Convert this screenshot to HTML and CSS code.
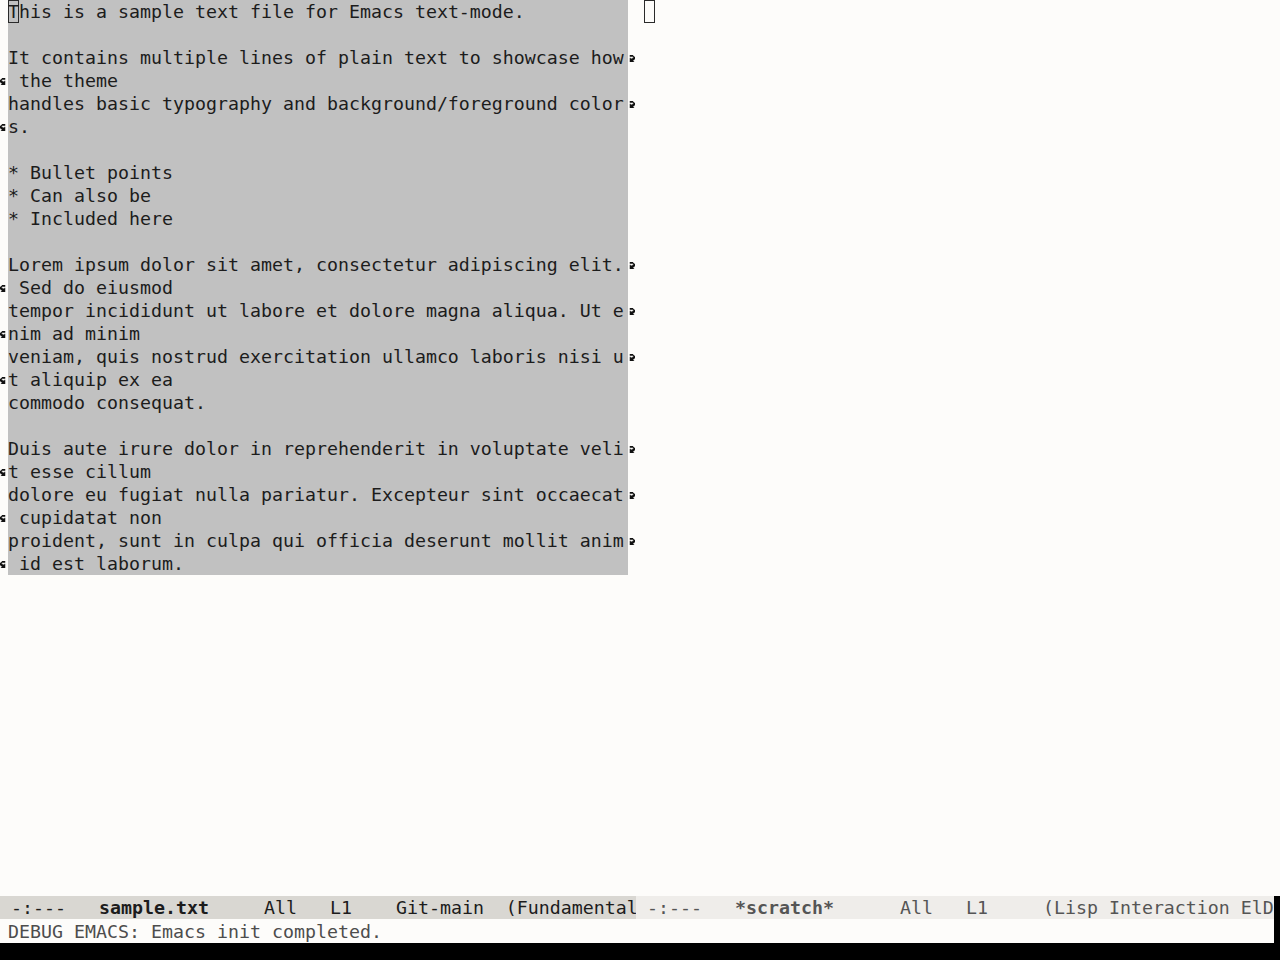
FILE: index.html
```
<!DOCTYPE html>
<html>
<head>
<meta charset="utf-8">
<link rel="stylesheet" href="styles.css">
</head>
<body>
<svg width="0" height="0" class="defs">
  <defs>
    <g id="rarrow">
      <path d="M2 0h4v1H2zM2 1h5v1H2zM6 2h2v1H6zM2 3h1v1H2zM5 3h3v1H5zM2 4h6v1H2zM2 5h5v1H2zM2 6h4v1H2zM2 7h5v1H2z"/>
    </g>
    <g id="larrow">
      <path d="M2 0h4v1H2zM1 1h5v1H1zM0 2h2v1H0zM0 3h3v1H0zM5 3h1v1H5zM0 4h6v1H0zM1 5h5v1H1zM2 6h4v1H2zM1 7h5v1H1z"/>
    </g>
  </defs>
</svg>
<div class="screen">
  <div class="windows">
    <div class="win win-left">
      <div class="wbody wbody-left">
        <div class="textblock">
          <div class="row"><div class="fl"></div><div class="tx"><span class="cursor">T</span>his is a sample text file for Emacs text-mode.</div><div class="fr"></div></div>
          <div class="row"><div class="fl"></div><div class="tx"></div><div class="fr"></div></div>
          <div class="row"><div class="fl"></div><div class="tx">It contains multiple lines of plain text to showcase how</div><div class="fr"><svg class="arr" viewBox="0 0 8 8"><use href="#rarrow"/></svg></div></div>
          <div class="row"><div class="fl"><svg class="arr" viewBox="0 0 8 8"><use href="#larrow"/></svg></div><div class="tx"> the theme</div><div class="fr"></div></div>
          <div class="row"><div class="fl"></div><div class="tx">handles basic typography and background/foreground color</div><div class="fr"><svg class="arr" viewBox="0 0 8 8"><use href="#rarrow"/></svg></div></div>
          <div class="row"><div class="fl"><svg class="arr" viewBox="0 0 8 8"><use href="#larrow"/></svg></div><div class="tx">s.</div><div class="fr"></div></div>
          <div class="row"><div class="fl"></div><div class="tx"></div><div class="fr"></div></div>
          <div class="row"><div class="fl"></div><div class="tx">* Bullet points</div><div class="fr"></div></div>
          <div class="row"><div class="fl"></div><div class="tx">* Can also be</div><div class="fr"></div></div>
          <div class="row"><div class="fl"></div><div class="tx">* Included here</div><div class="fr"></div></div>
          <div class="row"><div class="fl"></div><div class="tx"></div><div class="fr"></div></div>
          <div class="row"><div class="fl"></div><div class="tx">Lorem ipsum dolor sit amet, consectetur adipiscing elit.</div><div class="fr"><svg class="arr" viewBox="0 0 8 8"><use href="#rarrow"/></svg></div></div>
          <div class="row"><div class="fl"><svg class="arr" viewBox="0 0 8 8"><use href="#larrow"/></svg></div><div class="tx"> Sed do eiusmod</div><div class="fr"></div></div>
          <div class="row"><div class="fl"></div><div class="tx">tempor incididunt ut labore et dolore magna aliqua. Ut e</div><div class="fr"><svg class="arr" viewBox="0 0 8 8"><use href="#rarrow"/></svg></div></div>
          <div class="row"><div class="fl"><svg class="arr" viewBox="0 0 8 8"><use href="#larrow"/></svg></div><div class="tx">nim ad minim</div><div class="fr"></div></div>
          <div class="row"><div class="fl"></div><div class="tx">veniam, quis nostrud exercitation ullamco laboris nisi u</div><div class="fr"><svg class="arr" viewBox="0 0 8 8"><use href="#rarrow"/></svg></div></div>
          <div class="row"><div class="fl"><svg class="arr" viewBox="0 0 8 8"><use href="#larrow"/></svg></div><div class="tx">t aliquip ex ea</div><div class="fr"></div></div>
          <div class="row"><div class="fl"></div><div class="tx">commodo consequat.</div><div class="fr"></div></div>
          <div class="row"><div class="fl"></div><div class="tx"></div><div class="fr"></div></div>
          <div class="row"><div class="fl"></div><div class="tx">Duis aute irure dolor in reprehenderit in voluptate veli</div><div class="fr"><svg class="arr" viewBox="0 0 8 8"><use href="#rarrow"/></svg></div></div>
          <div class="row"><div class="fl"><svg class="arr" viewBox="0 0 8 8"><use href="#larrow"/></svg></div><div class="tx">t esse cillum</div><div class="fr"></div></div>
          <div class="row"><div class="fl"></div><div class="tx">dolore eu fugiat nulla pariatur. Excepteur sint occaecat</div><div class="fr"><svg class="arr" viewBox="0 0 8 8"><use href="#rarrow"/></svg></div></div>
          <div class="row"><div class="fl"><svg class="arr" viewBox="0 0 8 8"><use href="#larrow"/></svg></div><div class="tx"> cupidatat non</div><div class="fr"></div></div>
          <div class="row"><div class="fl"></div><div class="tx">proident, sunt in culpa qui officia deserunt mollit anim</div><div class="fr"><svg class="arr" viewBox="0 0 8 8"><use href="#rarrow"/></svg></div></div>
          <div class="row"><div class="fl"><svg class="arr" viewBox="0 0 8 8"><use href="#larrow"/></svg></div><div class="tx"> id est laborum.</div><div class="fr"></div></div>
        </div>
      </div>
      <div class="modeline ml-active"> -:---   <b>sample.txt</b>     All   L1    Git-main  (Fundamental)</div>
    </div>
    <div class="win win-right">
      <div class="wbody">
        <div class="row"><div class="fl"></div><div class="tx tx-plain"><span class="cursor"> </span></div><div class="fr"></div></div>
      </div>
      <div class="modeline ml-inactive"> -:---   <b>*scratch*</b>      All   L1     (Lisp Interaction ElDoc)</div>
    </div>
    <div class="edge">
      <div class="edge-top"></div>
    </div>
  </div>
  <div class="echo-row">
    <div class="echo">DEBUG EMACS: Emacs init completed.</div>
  </div>
</div>
</body>
</html>
```
FILE: styles.css
```
html, body {
  margin: 0;
  padding: 0;
}
body {
  width: 1280px;
  height: 960px;
  background: #000;
  overflow: hidden;
  font-family: "DejaVu Sans Mono", monospace;
  font-size: 18.27px;
  color: #1c1c1c;
}
.defs {
  position: absolute;
}
.screen {
  width: 1280px;
  display: flex;
  flex-direction: column;
}
.windows {
  display: flex;
  height: 919px;
}
.win {
  display: flex;
  flex-direction: column;
  overflow: hidden;
  background: #fdfcfa;
}
.win-left {
  width: 636px;
}
.win-right {
  width: 638px;
}
.edge {
  width: 6px;
  display: flex;
  flex-direction: column;
}
.edge-top {
  height: 896px;
  background: #fdfcfa;
}
.wbody {
  height: 896px;
  overflow: hidden;
}
.row {
  display: flex;
  height: 23px;
}
.fl, .fr {
  width: 8px;
  flex: none;
  display: flex;
  align-items: center;
}
.tx {
  flex: 1;
  white-space: pre;
  line-height: 23px;
  background: #c1c1c1;
  overflow: hidden;
}
.tx-plain {
  background: transparent;
}
.arr {
  width: 7px;
  height: 7px;
  fill: #111;
  margin-top: 1px;
}
.cursor {
  display: inline-block;
  width: 11px;
  height: 23px;
  vertical-align: top;
  box-shadow: inset 0 0 0 1px #2a2a2a;
}
.modeline {
  height: 23px;
  line-height: 23px;
  white-space: pre;
  overflow: hidden;
  flex: none;
}
.modeline b {
  font-weight: bold;
}
.ml-active {
  background: #d9d7d2;
  color: #1c1c1c;
}
.ml-inactive {
  background: #efedea;
  color: #555;
}
.echo-row {
  display: flex;
  height: 24px;
}
.echo {
  width: 1274px;
  height: 24px;
  line-height: 24px;
  padding-top: 1px;
  box-sizing: border-box;
  padding-left: 8px;
  white-space: pre;
  color: #4d4d4d;
  background: #fdfcfa;
}
```
